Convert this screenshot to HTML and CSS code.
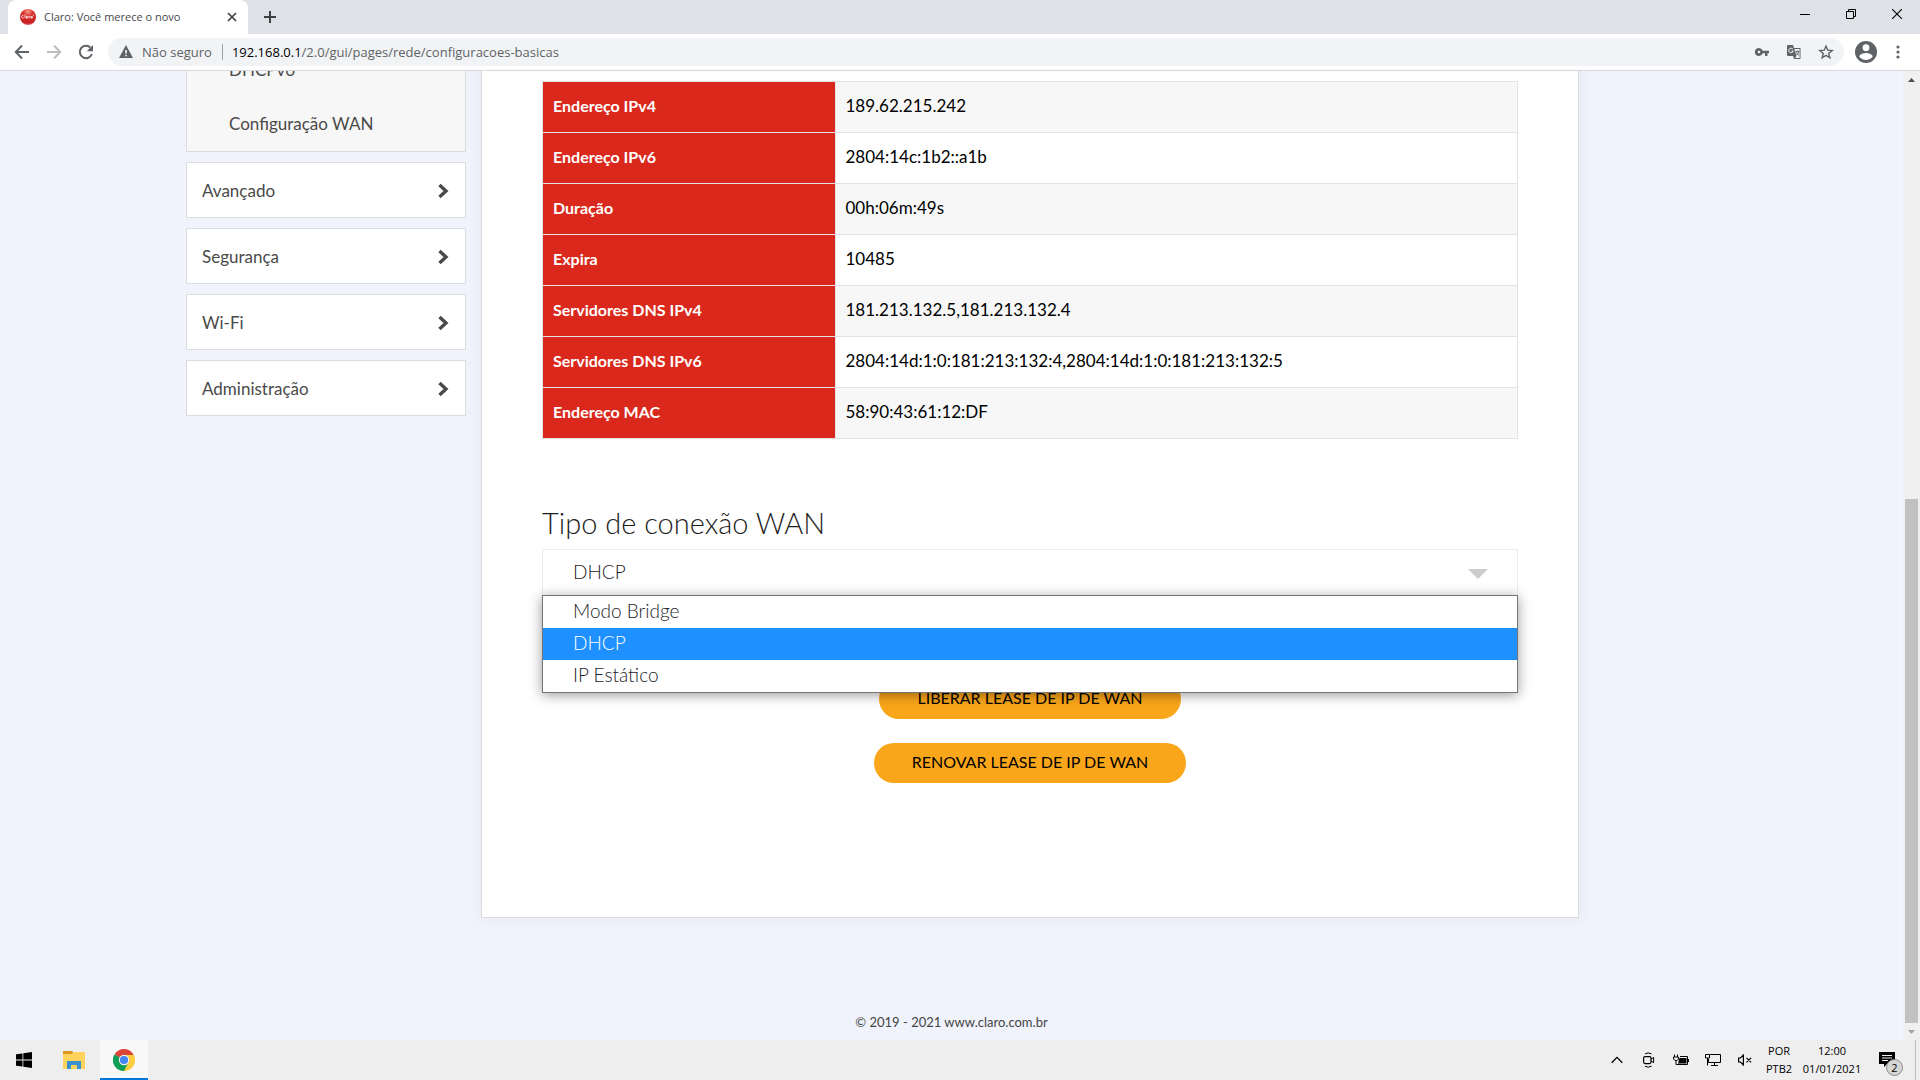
FILE: index.html
```html
<!DOCTYPE html>
<html lang="pt-BR">
<head>
<meta charset="utf-8">
<title>Claro: Você merece o novo</title>
<link rel="stylesheet" href="styles.css">
</head>
<body>
<div class="desktop">
  <header class="browser">
    <div class="tabstrip">
      <div class="tab">
        <svg class="favicon" width="16" height="16" viewBox="0 0 16 16"><defs><radialGradient id="fav" cx=".5" cy=".15" r=".9"><stop offset="0" stop-color="#f39a86"/><stop offset=".35" stop-color="#d8302a"/><stop offset=".8" stop-color="#c81e22"/><stop offset="1" stop-color="#e57b70"/></radialGradient></defs><circle cx="8" cy="8" r="8" fill="url(#fav)"/><path d="M3.600 6.700a1.300 1.300 0 1 0 0 2.200M5 5.600v3.500M6.300 7.500h1.400v1.600H6.300zM9 9.200V7.400h1M10.800 7.500h1.500v1.600h-1.500zM12.800 6.500l1.200-.6" fill="none" stroke="#fff" stroke-width=".8"/></svg>
        <span class="tab-title">Claro: Você merece o novo</span>
        <button class="icon-btn tab-close" aria-label="Fechar guia"><svg width="10" height="10" viewBox="0 0 10 10"><path d="M1 1l8 8M9 1l-8 8" stroke="#3c4043" stroke-width="1.700"/></svg></button>
      </div>
      <button class="icon-btn new-tab" aria-label="Nova guia"><svg width="12" height="12" viewBox="0 0 12 12"><path d="M6 0v12M0 6h12" stroke="#3c4043" stroke-width="2"/></svg></button>
      <div class="window-controls">
        <button class="icon-btn" aria-label="Minimizar"><svg width="10" height="10" viewBox="0 0 10 10"><path d="M0 5.500h10" stroke="#000"/></svg></button>
        <button class="icon-btn" aria-label="Restaurar"><svg width="10" height="10" viewBox="0 0 10 10"><path d="M.5 2.500h7v7h-7zM2.500 2.500v-2h7v7h-2" fill="none" stroke="#000"/></svg></button>
        <button class="icon-btn" aria-label="Fechar"><svg width="10" height="10" viewBox="0 0 10 10"><path d="M0 0l10 10M10 0L0 10" stroke="#000" stroke-width="1.100"/></svg></button>
      </div>
    </div>
    <div class="toolbar">
      <button class="icon-btn nav-btn" aria-label="Voltar"><svg width="16" height="16" viewBox="0 0 16 16"><path d="M15 8H2M8 1.500L1.800 8 8 14.500" fill="none" stroke="#5f6368" stroke-width="2"/></svg></button>
      <button class="icon-btn nav-btn" aria-label="Avançar"><svg width="16" height="16" viewBox="0 0 16 16"><path d="M1 8h13M8 1.500L14.200 8 8 14.500" fill="none" stroke="#bbbdbf" stroke-width="2"/></svg></button>
      <button class="icon-btn nav-btn" aria-label="Recarregar"><svg width="16" height="16" viewBox="0 0 16 16"><path d="M13.900 10A6.200 6.200 0 1 1 12.500 3.600" fill="none" stroke="#5f6368" stroke-width="2"/><path d="M15 1v6.200H8.800z" fill="#5f6368"/></svg></button>
      <div class="omnibox">
        <svg class="warning" width="14" height="14" viewBox="0 0 14 14"><path d="M7 0l7 13H0z" fill="#5f6368"/><path d="M7 5v3.500M7 9.700v1.600" stroke="#fff" stroke-width="1.500"/></svg>
        <span class="security">Não seguro</span>
        <span class="divider"></span>
        <span class="url"><b>192.168.0.1</b>/2.0/gui/pages/rede/configuracoes-basicas</span>
        <div class="omnibox-actions">
          <button class="icon-btn" aria-label="Senhas"><svg width="16" height="16" viewBox="0 0 16 16"><path d="M5 4a4 4 0 1 0 3.700 5.300H11V12h2.500V9.300H15V6.700H8.700A4 4 0 0 0 5 4zm0 2.700a1.300 1.300 0 1 1 0 2.600 1.300 1.300 0 0 1 0-2.600z" fill="#5f6368"/></svg></button>
          <button class="icon-btn" aria-label="Traduzir"><svg width="16" height="16" viewBox="0 0 16 16"><path d="M2 1h5l1 3h6.500v11H8l-1-3H2a1 1 0 0 1-1-1V2a1 1 0 0 1 1-1z" fill="#5f6368"/><path d="M8.400 5h5.200v9H9l1.500-2z" fill="#f1f3f4"/><path d="M6.800 5a2.300 2.300 0 1 0 .5 2H5.500" fill="none" stroke="#f1f3f4"/><path d="M9.500 7.500h4M11.500 6.500v1M12.800 7.500c-.3 1.700-1.300 3-2.300 3.800M10.300 8.300c.5 1.300 1.500 2.300 2.700 3" fill="none" stroke="#5f6368" stroke-width=".9"/></svg></button>
          <button class="icon-btn" aria-label="Favoritar"><svg width="16" height="16" viewBox="0 0 16 16"><path d="M8 2l1.700 4.200 4.500.3-3.500 2.900 1.200 4.400L8 11.400l-3.900 2.400 1.200-4.400-3.500-2.900 4.500-.3z" fill="none" stroke="#5f6368" stroke-width="1.400"/></svg></button>
        </div>
      </div>
      <button class="icon-btn profile" aria-label="Perfil"><svg width="22" height="22" viewBox="0 0 22 22"><circle cx="11" cy="11" r="11" fill="#5f6368"/><circle cx="11" cy="6.700" r="3.400" fill="#fff"/><path d="M4.300 15.400c0-2.300 4.500-3.500 6.700-3.500s6.700 1.200 6.700 3.500a8 8 0 0 1-13.400 0z" fill="#fff"/></svg></button>
      <button class="icon-btn more" aria-label="Mais"><svg width="4" height="14" viewBox="0 0 4 14"><g fill="#5f6368"><circle cx="2" cy="2" r="1.600"/><circle cx="2" cy="7" r="1.600"/><circle cx="2" cy="12" r="1.600"/></g></svg></button>
    </div>
  </header>

  <div class="viewport">
    <div class="page">
      <div class="container">
        <nav class="sidebar">
          <div class="submenu">
            <a href="#dhcpv6">DHCPv6</a>
            <a href="#wan">Configuração WAN</a>
          </div>
          <a class="menu-item" href="#avancado">Avançado<svg width="12" height="16" viewBox="0 0 12 16"><path d="M2.500 2L9 8l-6.500 6" fill="none" stroke="#4a4a4a" stroke-width="3.400"/></svg></a>
          <a class="menu-item" href="#seguranca">Segurança<svg width="12" height="16" viewBox="0 0 12 16"><path d="M2.500 2L9 8l-6.500 6" fill="none" stroke="#4a4a4a" stroke-width="3.400"/></svg></a>
          <a class="menu-item" href="#wifi">Wi-Fi<svg width="12" height="16" viewBox="0 0 12 16"><path d="M2.500 2L9 8l-6.500 6" fill="none" stroke="#4a4a4a" stroke-width="3.400"/></svg></a>
          <a class="menu-item" href="#administracao">Administração<svg width="12" height="16" viewBox="0 0 12 16"><path d="M2.500 2L9 8l-6.500 6" fill="none" stroke="#4a4a4a" stroke-width="3.400"/></svg></a>
        </nav>
        <main class="card">
          <table class="info">
            <tbody>
              <tr><th scope="row">Endereço IPv4</th><td>189.62.215.242</td></tr>
              <tr><th scope="row">Endereço IPv6</th><td>2804:14c:1b2::a1b</td></tr>
              <tr><th scope="row">Duração</th><td>00h:06m:49s</td></tr>
              <tr><th scope="row">Expira</th><td>10485</td></tr>
              <tr><th scope="row">Servidores DNS IPv4</th><td>181.213.132.5,181.213.132.4</td></tr>
              <tr><th scope="row">Servidores DNS IPv6</th><td>2804:14d:1:0:181:213:132:4,2804:14d:1:0:181:213:132:5</td></tr>
              <tr><th scope="row">Endereço MAC</th><td>58:90:43:61:12:DF</td></tr>
            </tbody>
          </table>
          <label class="field-label" for="wan-type">Tipo de conexão WAN</label>
          <div class="select-wrap">
            <select id="wan-type">
              <option>Modo Bridge</option>
              <option selected>DHCP</option>
              <option>IP Estático</option>
            </select>
            <svg class="caret" width="20" height="10" viewBox="0 0 20 10"><path d="M0 0h20L10 10z" fill="#ccc"/></svg>
            <ul class="options" role="listbox">
              <li role="option">Modo Bridge</li>
              <li role="option" class="selected" aria-selected="true">DHCP</li>
              <li role="option">IP Estático</li>
            </ul>
          </div>
          <div class="actions">
            <button class="pill">LIBERAR LEASE DE IP DE WAN</button>
            <button class="pill">RENOVAR LEASE DE IP DE WAN</button>
          </div>
        </main>
      </div>
      <footer class="footer">© 2019 - 2021 www.claro.com.br</footer>
    </div>
    <div class="scrollbar">
      <svg width="17" height="17" viewBox="0 0 17 17"><path d="M5 11l3.500-4 3.500 4z" fill="#505050"/></svg>
      <div class="track"><div class="thumb"></div></div>
      <svg width="17" height="17" viewBox="0 0 17 17"><path d="M5 7l3.500 4L12 7z" fill="#a3a3a3"/></svg>
    </div>
  </div>

  <div class="taskbar">
    <button class="icon-btn task" aria-label="Iniciar"><svg width="16" height="16" viewBox="0 0 16 16"><path d="M0 2.300l6.500-.9v6.100H0zM7.300 1.300L16 0v7.500H7.300zM0 8.500h6.500v6.100L0 13.700zM7.300 8.500H16V16l-8.700-1.300z"/></svg></button>
    <button class="icon-btn task" aria-label="Explorador"><svg width="22" height="18" viewBox="0 0 22 18"><path d="M0 0h9l1 1v3H0z" fill="#d99a1e"/><path d="M0 3h9l2-2h11v17H0z" fill="#ffd35e"/><path d="M4 18v-8h14v8h-4v-4H8v4z" fill="#3a91d0"/></svg></button>
    <button class="icon-btn task active" aria-label="Chrome"><svg width="24" height="24" viewBox="0 0 24 24"><path d="M12 12L2.500 6.500A11 11 0 0 1 21.500 6.500z" fill="#db4437"/><path d="M12 12L21.500 6.500A11 11 0 0 1 12 23z" fill="#ffcd40"/><path d="M12 12v11A11 11 0 0 1 2.500 6.500z" fill="#0f9d58"/><path d="M12 7h9.800A11 11 0 0 1 12 23l4.300-8.500z" fill="#ffcd40"/><path d="M2.500 6.500l5.200 8A5 5 0 0 0 16.300 14.500L12 23A11 11 0 0 1 2.500 6.500z" fill="#0f9d58"/><circle cx="12" cy="12" r="5.200" fill="#f1f1f1"/><circle cx="12" cy="12" r="4.100" fill="#4285f4"/></svg></button>
    <div class="tray">
      <button class="icon-btn tray-btn" aria-label="Mostrar ícones ocultos"><svg width="12" height="8" viewBox="0 0 12 8"><path d="M.7 6.800L6 1.400l5.300 5.400" fill="none" stroke="#000" stroke-width="1.300"/></svg></button>
      <button class="icon-btn tray-btn" aria-label="Reunir agora"><svg width="12" height="16" viewBox="0 0 12 16"><rect x=".6" y="4.600" width="7.400" height="7" rx="1.500" fill="none" stroke="#000" stroke-width="1.200"/><path d="M8 7.200l2.600-1.700v5.200L8 9M2 1.900Q5 -.1 8.600 1.900M2 14.200Q5 16.200 8.600 14.200" fill="none" stroke="#000"/></svg></button>
      <button class="icon-btn tray-btn" aria-label="Bateria"><svg width="16" height="12" viewBox="0 0 16 12"><path d="M.5 3h5v2L4 6.500H2L.5 5zM1.500 .5v2.500M4.500 .5v2.500M3 6.500v4h3" fill="none" stroke="#000"/><path d="M7 2.500h7.500v8h-9v-1M7 2.500" fill="none" stroke="#000"/><path d="M6.500 4h7v5.500H5.500V7zM15 5h1v3h-1z"/></svg></button>
      <button class="icon-btn tray-btn" aria-label="Rede"><svg width="16" height="14" viewBox="0 0 16 14"><path d="M5 1.500h10.500v8H3.500V6M9.500 9.500v3M6 12.500h7M.5 1.500h4V5h-4zM2.500 5v7.500" fill="none" stroke="#000"/></svg></button>
      <button class="icon-btn tray-btn" aria-label="Volume"><svg width="14" height="12" viewBox="0 0 14 12"><path d="M.6 4v4h1.900l2.900 3V1L2.500 4zM8.500 3.800l4.600 4.600M13.100 3.800L8.500 8.400" fill="none" stroke="#000" stroke-width="1.200"/></svg></button>
      <div class="lang"><span>POR</span><span>PTB2</span></div>
      <div class="clock"><time>12:00</time><time>01/01/2021</time></div>
      <button class="icon-btn notif" aria-label="Notificações"><svg width="16" height="16" viewBox="0 0 16 16"><path d="M0 0h16v12H8l-3 3v-3H0z"/><path d="M3 3.500h10M3 6h10M3 8.500h6" stroke="#eee"/></svg><span class="badge">2</span></button>
      <span class="show-desktop"></span>
    </div>
  </div>
</div>
</body>
</html>
```
FILE: styles.css
```css
* { box-sizing: border-box; }

body {
  margin: 0;
  font-family: Lato, "Open Sans", sans-serif;
  color: #000;
}

.desktop {
  display: flex;
  flex-direction: column;
  height: 100vh;
  overflow: hidden;
}

.icon-btn {
  display: flex;
  align-items: center;
  justify-content: center;
  padding: 0;
  border: 0;
  background: none;
  font: inherit;
}

/* Browser frame */
.browser {
  flex: none;
  border-bottom: 1px solid #d6d8db;
  font-family: "Open Sans", sans-serif;
}

.tabstrip {
  display: flex;
  height: 34px;
  padding-left: 8px;
  background: #dee1e6;
}

.tab {
  display: flex;
  align-items: center;
  gap: 8px;
  width: 240px;
  padding: 0 11px 0 12px;
  border-radius: 8px 8px 0 0;
  background: #fff;
  color: #45494d;
}

.tab-title { flex: 1; padding-bottom: 2px; font-size: 11px; white-space: nowrap; }
.new-tab { width: 44px; }
.window-controls { display: flex; margin-left: auto; }
.window-controls .icon-btn { width: 46px; height: 28px; }

.toolbar {
  display: flex;
  align-items: center;
  height: 36px;
  padding: 0 20px 0 6px;
  background: #fff;
}

.nav-btn { width: 32px; height: 32px; }

.omnibox {
  display: flex;
  flex: 1;
  align-items: center;
  height: 28px;
  margin-left: 6px;
  padding: 0 10px 0 11px;
  border-radius: 14px;
  background: #f1f3f4;
  color: #5f6368;
  font-size: 13px;
}

.security { margin-left: 9px; }
.divider { width: 1px; height: 16px; margin: 0 9px 0 10px; background: #9aa0a6; }
.url b { color: #000; font-weight: 400; }
.omnibox-actions { display: flex; gap: 16px; margin-left: auto; }
.profile { margin-left: 11px; }
.more { width: 4px; margin-left: 19px; }

/* Page */
.viewport {
  display: flex;
  flex: 1;
  min-height: 0;
  overflow: hidden;
  background: #f0f3fc;
}

/* The page is scrolled past its first rows */
.page { flex: 1; min-width: 0; margin-top: -27px; }

.container {
  display: grid;
  grid-template-columns: 280px minmax(0, 1098px);
  align-items: start;
  gap: 15px;
  max-width: 1561px;
  margin: 0 auto;
  padding: 0 15px;
}

.sidebar { display: flex; flex-direction: column; gap: 10px; font-size: 17px; }
.sidebar a { color: #4a4a4a; text-decoration: none; }

.submenu {
  display: flex;
  flex-direction: column;
  height: 108px;
  border: 1px solid #dcdcdf;
  border-top: 0;
  background: #f7f7f7;
}

.submenu a { height: 54px; padding-left: 42px; line-height: 52px; }

.menu-item {
  display: flex;
  align-items: center;
  justify-content: space-between;
  height: 56px;
  padding: 0 16px 0 15px;
  border: 1px solid #dcdcdf;
  background: #fff;
}

.menu-item svg { margin-top: 2px; }

.card {
  padding: 37px 60px 134px;
  border: 1px solid #dcdcdf;
  border-top: 0;
  background: #fff;
  box-shadow: 0 0 15px rgba(0, 0, 0, .06);
}

.info { width: 100%; border-collapse: collapse; text-align: left; }
.info th, .info td { height: 51px; padding: 0 10px 4px; border: 1px solid #e2e3e6; }
.info th { width: 30%; background: #da291c; color: #fff; font-size: 16px; font-weight: 700; }
.info td { font-size: 17px; }
.info tr:nth-child(odd) td { background: #f7f7f7; }

.field-label {
  display: block;
  margin-top: 64px;
  color: #1d1d1d;
  font-size: 29px;
  font-weight: 300;
  line-height: 40px;
}

.select-wrap { position: relative; margin-top: 6px; font-size: 19px; font-weight: 300; }

.select-wrap select {
  display: block;
  width: 100%;
  height: 50px;
  padding: 0 30px 6px;
  border: 1px solid #ebebeb;
  border-radius: 0;
  outline: 0;
  appearance: none;
  background: #fff;
  color: #1a2226;
  font: inherit;
}

.caret { position: absolute; top: 20px; right: 30px; }

.options {
  position: absolute;
  top: 46px;
  left: 0;
  right: 0;
  margin: 0;
  padding: 0;
  border: 1px solid #757575;
  background: #fff;
  box-shadow: 0 2px 12px rgba(0, 0, 0, .4);
  color: #1a2226;
  list-style: none;
  line-height: 30px;
}

.options li { padding: 0 30px 2px; }
.options .selected { background: #1e90ff; color: #fff; }

.actions { display: flex; flex-direction: column; align-items: center; gap: 24px; margin-top: 80px; }

.pill {
  height: 40px;
  padding: 0 38px 4px;
  border: 0;
  border-radius: 20px;
  background: #faa61a;
  color: #000;
  font-family: inherit;
  font-size: 16px;
}

.footer { margin-top: 94px; color: #444; font-size: 13px; line-height: 20px; text-align: center; }

.scrollbar {
  display: flex;
  flex: none;
  flex-direction: column;
  width: 17px;
  background: #f0f0f0;
}

.track { display: flex; flex: 1; align-items: flex-end; justify-content: center; }
.thumb { width: 13px; height: 56%; background: #c1c1c1; }

/* Taskbar */
.taskbar {
  display: flex;
  flex: none;
  gap: 2px;
  height: 40px;
  background: #eee;
  font-family: "Open Sans", sans-serif;
  font-size: 11px;
}

.task { width: 48px; }
.task.active { border-top: 2px solid #f8f8f8; border-bottom: 2px solid #0078d7; background: #f8f8f8; }
.tray { display: flex; margin-left: auto; }
.tray-btn { width: 32px; }

.lang, .clock {
  display: flex;
  flex-direction: column;
  align-items: center;
  justify-content: center;
  line-height: 18px;
}

.lang { width: 36px; }
.clock { width: 70px; }
.notif { position: relative; width: 40px; }

.badge {
  position: absolute;
  right: 4px;
  bottom: 4px;
  width: 17px;
  height: 17px;
  border: 1px solid #8a8a8a;
  border-radius: 50%;
  background: #d5d5d5;
  line-height: 15px;
  text-align: center;
}

.show-desktop { width: 5px; margin-left: 8px; border-left: 1px solid #bdbdbd; }
```
